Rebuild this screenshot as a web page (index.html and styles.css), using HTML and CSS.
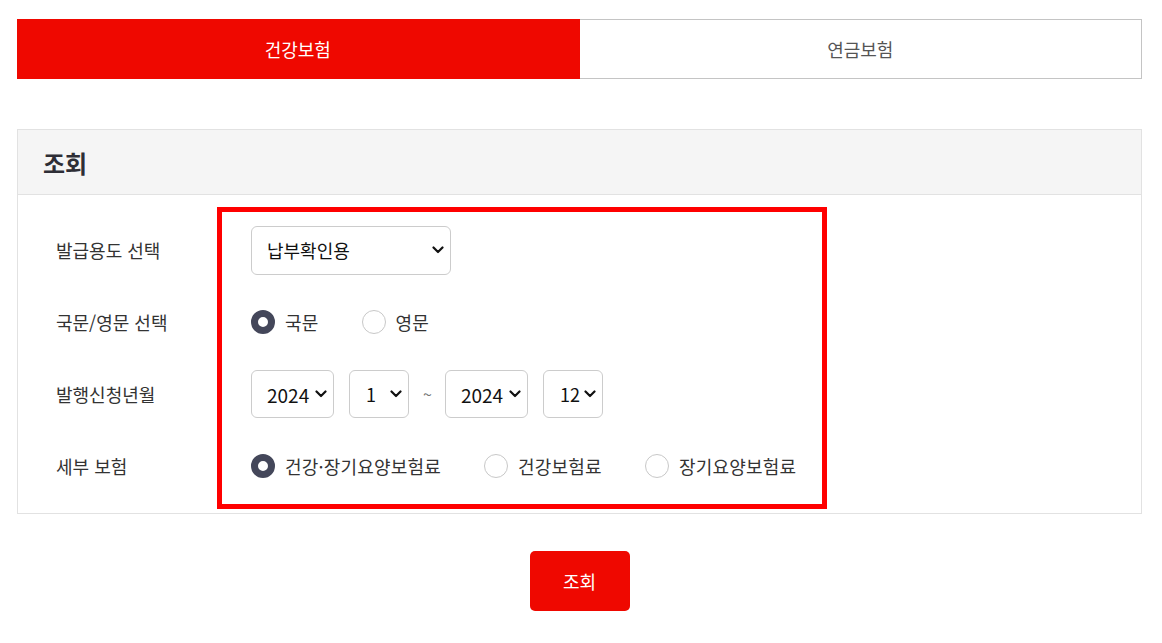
FILE: index.html
```html
<!DOCTYPE html>
<html lang="ko">
<head>
<meta charset="utf-8">
<title>조회</title>
<link rel="stylesheet" href="styles.css">
</head>
<body>
<div class="page">
  <div class="tabs">
    <div class="tab tab-active">건강보험</div>
    <div class="tab">연금보험</div>
  </div>

  <section class="panel">
    <div class="panel-head">조회</div>
    <div class="panel-body">
      <div class="labels">
        <div class="row">발급용도 선택</div>
        <div class="row">국문/영문 선택</div>
        <div class="row">발행신청년월</div>
        <div class="row">세부 보험</div>
      </div>
      <div class="controls">
        <div class="row">
          <div class="sel sel-wide"><span>납부확인용</span><svg class="chev" viewBox="0 0 12 8" width="12" height="8"><path d="M1.5 1.5 L6 6 L10.5 1.5" /></svg></div>
        </div>
        <div class="row radios">
          <label class="radio"><span class="dot on"></span>국문</label>
          <label class="radio"><span class="dot"></span>영문</label>
        </div>
        <div class="row">
          <div class="sel sel-year"><span>2024</span><svg class="chev" viewBox="0 0 12 8" width="12" height="8"><path d="M1.5 1.5 L6 6 L10.5 1.5" /></svg></div>
          <div class="sel sel-month"><span>1</span><svg class="chev" viewBox="0 0 12 8" width="12" height="8"><path d="M1.5 1.5 L6 6 L10.5 1.5" /></svg></div>
          <span class="tilde">~</span>
          <div class="sel sel-year"><span>2024</span><svg class="chev" viewBox="0 0 12 8" width="12" height="8"><path d="M1.5 1.5 L6 6 L10.5 1.5" /></svg></div>
          <div class="sel sel-month"><span>12</span><svg class="chev" viewBox="0 0 12 8" width="12" height="8"><path d="M1.5 1.5 L6 6 L10.5 1.5" /></svg></div>
        </div>
        <div class="row radios">
          <label class="radio"><span class="dot on"></span>건강·장기요양보험료</label>
          <label class="radio"><span class="dot"></span>건강보험료</label>
          <label class="radio"><span class="dot"></span>장기요양보험료</label>
        </div>
      </div>
    </div>
  </section>

  <div class="actions">
    <button class="btn">조회</button>
  </div>
</div>
</body>
</html>
```

FILE: styles.css
```css
* { box-sizing: border-box; }
html, body { margin: 0; padding: 0; background: #fff; }
body {
  font-family: "Noto Sans CJK KR", "Noto Sans", sans-serif;
  color: #333;
  font-size: 18px;
}
.page {
  width: 1125px;
  margin-left: 17px;
  padding-top: 19px;
}
.tabs {
  display: flex;
  height: 60px;
}
.tab {
  flex: 1;
  display: flex;
  align-items: center;
  justify-content: center;
  border: 1px solid #c4c4c4;
  border-left: none;
  color: #555;
  font-size: 18px;
}
.tab-active {
  background: #ef0800;
  border-color: #ef0800;
  color: #fff;
}
.panel {
  margin-top: 50px;
  border: 1px solid #e2e2e2;
}
.panel-head {
  height: 65px;
  background: #f5f5f5;
  border-bottom: 1px solid #e2e2e2;
  display: flex;
  align-items: center;
  padding-left: 25px;
  font-size: 24px;
  font-weight: 700;
  color: #2e2e36;
}
.panel-body {
  display: flex;
  padding: 12px 0 4px 38px;
}
.labels {
  width: 161px;
  display: flex;
  flex-direction: column;
  gap: 24px;
  padding-top: 19px;
}
.row {
  height: 48px;
  display: flex;
  align-items: center;
}
.labels .row { color: #333; }
.controls {
  width: 610px;
  border: 5px solid #ff0000;
  padding: 14px 0 14px 29px;
  display: flex;
  flex-direction: column;
  gap: 24px;
}
.sel {
  height: 48px;
  border: 1px solid #cccccc;
  border-radius: 6px;
  display: flex;
  align-items: center;
  justify-content: space-between;
  padding: 0 6px 0 15px;
  color: #111;
  font-size: 18px;
  background: #fff;
}
.sel-wide { width: 200px; height: 49px; }
.sel-year { width: 83px; font-size: 19px; }
.sel-month { width: 60px; padding-left: 16px; font-size: 18px; }
.sel + .sel { margin-left: 15px; }
.chev { flex: none; }
.chev path {
  fill: none;
  stroke: #111;
  stroke-width: 2.2;
  stroke-linecap: round;
  stroke-linejoin: round;
}
.tilde {
  color: #777;
  font-size: 16px;
  margin: 0 13px 0 14px;
}
.radios { gap: 43px; }
.radio {
  display: flex;
  align-items: center;
  gap: 10px;
  color: #333;
  font-size: 18px;
  letter-spacing: 0.2px;
}
.dot {
  width: 24px;
  height: 24px;
  border-radius: 50%;
  border: 1px solid #c8c8c8;
  background: #fff;
  flex: none;
}
.dot.on {
  border: 7px solid #44475a;
}
.actions {
  display: flex;
  justify-content: center;
  margin-top: 37px;
}
.btn {
  width: 100px;
  height: 60px;
  border: none;
  border-radius: 5px;
  background: #ef0800;
  color: #fff;
  font-family: "Noto Sans CJK KR", "Noto Sans", sans-serif;
  font-size: 18px;
}
```
